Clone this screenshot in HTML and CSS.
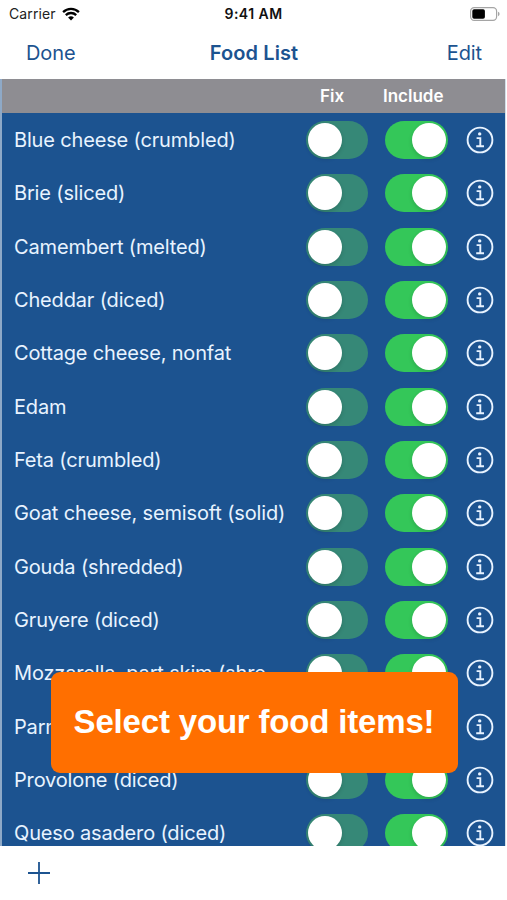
FILE: index.html
```html
<!DOCTYPE html>
<html lang="en">
<head>
    <meta charset="UTF-8">
    <meta name="viewport" content="width=device-width, initial-scale=1.0">
    <title>Food List</title>
    <link rel="stylesheet" href="styles.css">
</head>
<body>
    <svg class="symbols">
        <symbol id="info" viewBox="0 0 28 28">
            <circle cx="14" cy="14" r="12.4" fill="none" stroke="currentColor" stroke-width="1.9"/>
            <circle cx="13.7" cy="7.9" r="1.7" fill="currentColor"/>
            <path d="M10.6 12.1h3.7v8.1M10.2 20.3h7.8" fill="none" stroke="currentColor" stroke-width="1.9"/>
        </symbol>
    </svg>

    <div class="status-bar">
        <div class="carrier">
            <span>Carrier</span>
            <svg class="wifi" viewBox="0 0 18 14">
                <path d="M1.1 5.1a11.3 11.3 0 0 1 15.8 0M3.8 8.1a7.5 7.5 0 0 1 10.4 0" fill="none" stroke="#000" stroke-width="2.3"/>
                <path d="M9 13.6 6.1 10.6a4.1 4.1 0 0 1 5.8 0z" fill="#000"/>
            </svg>
        </div>
        <div class="time">9:41 AM</div>
        <svg class="battery" viewBox="0 0 30 14">
            <rect x=".6" y=".6" width="26" height="12.8" rx="3.6" fill="none" stroke="#a5a5a5" stroke-width="1.2"/>
            <rect x="2.3" y="2.3" width="12.6" height="9.4" rx="1.8" fill="#000"/>
            <path d="M28 4.8q1.6.6 1.6 2.2t-1.6 2.2z" fill="#a5a5a5"/>
        </svg>
    </div>

    <div class="nav-bar">
        <span class="nav-button">Done</span>
        <span class="nav-title">Food List</span>
        <span class="nav-button edit">Edit</span>
    </div>

    <div class="content">
        <div class="table-header">
            <span></span>
            <span class="fix">Fix</span>
            <span class="include">Include</span>
        </div>
        <div class="food-list" id="foodList"></div>
    </div>

    <div class="toolbar">
        <svg class="add" viewBox="0 0 22 22">
            <path d="M11 0v22M0 11h22" stroke="#1c5390" stroke-width="1.8"/>
        </svg>
    </div>

    <div class="banner">Select your food items!</div>

    <script>
        const foods = [
            "Blue cheese (crumbled)",
            "Brie (sliced)",
            "Camembert (melted)",
            "Cheddar (diced)",
            "Cottage cheese, nonfat",
            "Edam",
            "Feta (crumbled)",
            "Goat cheese, semisoft (solid)",
            "Gouda (shredded)",
            "Gruyere (diced)",
            "Mozzarella, part skim (shre...",
            "Parmesan (grated)",
            "Provolone (diced)",
            "Queso asadero (diced)"
        ];

        const list = document.getElementById("foodList");
        foods.forEach((food) => {
            const row = document.createElement("div");
            row.classList.add("row");
            row.innerHTML = `
                <span class="name">${food}</span>
                <span class="switch"></span>
                <span class="switch on"></span>
                <svg class="info"><use href="#info"/></svg>`;
            list.appendChild(row);
        });
    </script>
</body>
</html>
```

FILE: styles.css
```css
body {
    margin: 0;
    height: 900px;
    overflow: hidden;
    position: relative;
    display: flex;
    flex-direction: column;
    background: white;
    font-family: Inter, "Liberation Sans", sans-serif;
    color: #1c5390;
}
.symbols {
    display: none;
}
.status-bar {
    display: grid;
    grid-template-columns: 1fr auto 1fr;
    align-items: center;
    height: 27px;
    padding: 0 7px 0 9px;
    font-size: 14px;
    color: #222;
}
.carrier {
    display: flex;
    align-items: center;
    gap: 6px;
    letter-spacing: 0.1px;
}
.wifi {
    width: 18px;
    height: 14px;
}
.time {
    padding-right: 2px;
    font-weight: 600;
    letter-spacing: 0.45px;
    color: #111;
}
.battery {
    width: 30px;
    height: 14px;
    justify-self: end;
}
.nav-bar {
    display: grid;
    grid-template-columns: 1fr auto 1fr;
    align-items: center;
    height: 52px;
    padding: 0 25px 0 26px;
    font-size: 20px;
    letter-spacing: -0.1px;
}
.nav-title {
    font-weight: 600;
    letter-spacing: 0.1px;
}
.edit {
    justify-self: end;
}
.content {
    height: 767px;
    box-sizing: border-box;
    overflow: hidden;
    border-left: 2px solid #8ea9c7;
    border-right: 1px solid #d5dfea;
    margin-right: 1px;
    background: #1c5390;
}
.table-header {
    display: grid;
    grid-template-columns: 304px 77px 1fr;
    align-items: center;
    height: 34px;
    background: #8e8d92;
    color: white;
    font-size: 17px;
    font-weight: 600;
}
.fix {
    padding-left: 14px;
}
.food-list {
    padding-top: 0.5px;
}
.row {
    display: grid;
    grid-template-columns: 275px 62px 62px 28px;
    column-gap: 17px;
    align-items: center;
    height: 53.33px;
    padding-left: 12px;
}
.name {
    overflow: hidden;
    text-overflow: ellipsis;
    white-space: nowrap;
    color: #e8f3ff;
    font-size: 20px;
    letter-spacing: -0.16px;
    line-height: 30px;
}
.switch {
    display: flex;
    align-items: center;
    box-sizing: border-box;
    height: 38px;
    padding: 0 2px;
    border-radius: 19px;
    background: #368877;
}
.switch::before {
    content: "";
    width: 34px;
    height: 34px;
    border-radius: 50%;
    background: white;
    box-shadow: 0 2px 4px rgba(0, 0, 0, 0.15);
}
.switch.on {
    justify-content: flex-end;
    margin-right: -0.5px;
    background: #34c759;
}
.info {
    width: 28px;
    height: 28px;
    margin-left: 1.5px;
    color: #e8f3ff;
}
.toolbar {
    display: flex;
    align-items: center;
    height: 54px;
    padding-left: 28px;
}
.add {
    width: 22px;
    height: 22px;
}
/* floats over the list */
.banner {
    position: absolute;
    left: 50.5px;
    top: 671.5px;
    width: 407px;
    height: 101px;
    border-radius: 9px;
    background: #ff6f00;
    color: white;
    font-family: "Liberation Sans", sans-serif;
    font-size: 33px;
    font-weight: bold;
    letter-spacing: -0.18px;
    line-height: 99px;
    text-align: center;
}
```
